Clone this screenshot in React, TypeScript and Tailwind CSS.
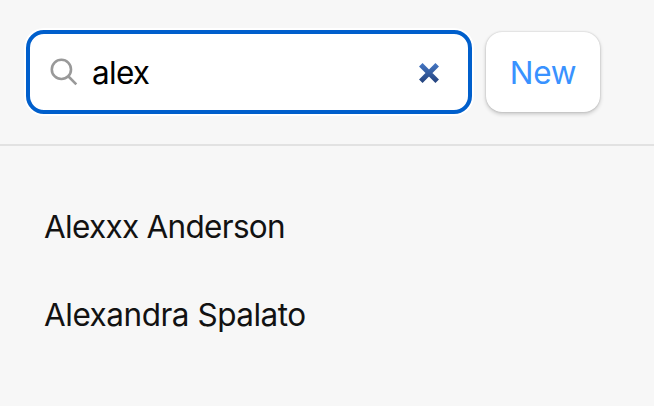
import React, { useState } from 'react';

const contacts = [
  { name: "Alexxx Anderson", className: "tracking-[-0.7px]" },
  { name: "Alexandra Spalato", className: "tracking-[-0.48px]" }
];

const SearchIcon = () => (
  <svg viewBox="0 0 28 28" className="size-7 shrink-0" fill="none" stroke="#999999" strokeWidth="2.6">
    <circle cx="11.4" cy="11.4" r="9.6" />
    <path d="M18 18L26.3 26.3" />
  </svg>
);

const ClearIcon = () => (
  <svg viewBox="0 0 20 20" className="size-5 overflow-visible" fill="none" stroke="url(#clear)" strokeWidth="5">
    <defs>
      <linearGradient id="clear" gradientUnits="userSpaceOnUse" x1="0" y1="0" x2="0" y2="20">
        <stop offset="0" stopColor="#4577c4" />
        <stop offset="1" stopColor="#24427c" />
      </linearGradient>
    </defs>
    <path d="M1.8 1.8L18.2 18.2M18.2 1.8L1.8 18.2" />
  </svg>
);

export default function App() {
  const [query, setQuery] = useState("alex");

  return (
    <div className="min-h-screen bg-[#f7f7f7] font-['Inter',sans-serif] text-[31.5px] text-[#121212]">
      <div className="flex h-[146px] items-start gap-3.5 border-b-2 border-[#e2e2e2] pl-[26px] pt-[30px]">
        <form
          className="flex h-[84px] w-[446px] items-center rounded-[18px] border-4 border-[#005fcc] bg-white pl-5 pr-[29px] shadow-[0_0_0_2px_#fff]"
          onSubmit={(e) => e.preventDefault()}
        >
          <SearchIcon />
          <input
            aria-label="Search contacts"
            value={query}
            onChange={(e) => setQuery(e.target.value)}
            className="ml-3.5 h-12 min-w-0 flex-1 bg-transparent text-[31.5px] leading-[46px] tracking-[-0.7px] text-black outline-none"
          />
          <button type="button" aria-label="Clear" className="pt-0.5" onClick={() => setQuery("")}>
            <ClearIcon />
          </button>
        </form>
        <button
          type="button"
          className="mt-0.5 h-20 w-[114px] rounded-2xl bg-white pt-0.5 tracking-[-0.2px] text-[#3992ff] shadow-[0_0_2px_rgba(0,0,0,0.2),0_2px_4px_rgba(0,0,0,0.2)]"
        >
          New
        </button>
      </div>

      <ul className="pl-[44px] pt-[37px]">
        {contacts.map((contact) => (
          <li key={contact.name} className="flex h-22 items-center">
            <span className={contact.className}>{contact.name}</span>
          </li>
        ))}
      </ul>
    </div>
  );
}
